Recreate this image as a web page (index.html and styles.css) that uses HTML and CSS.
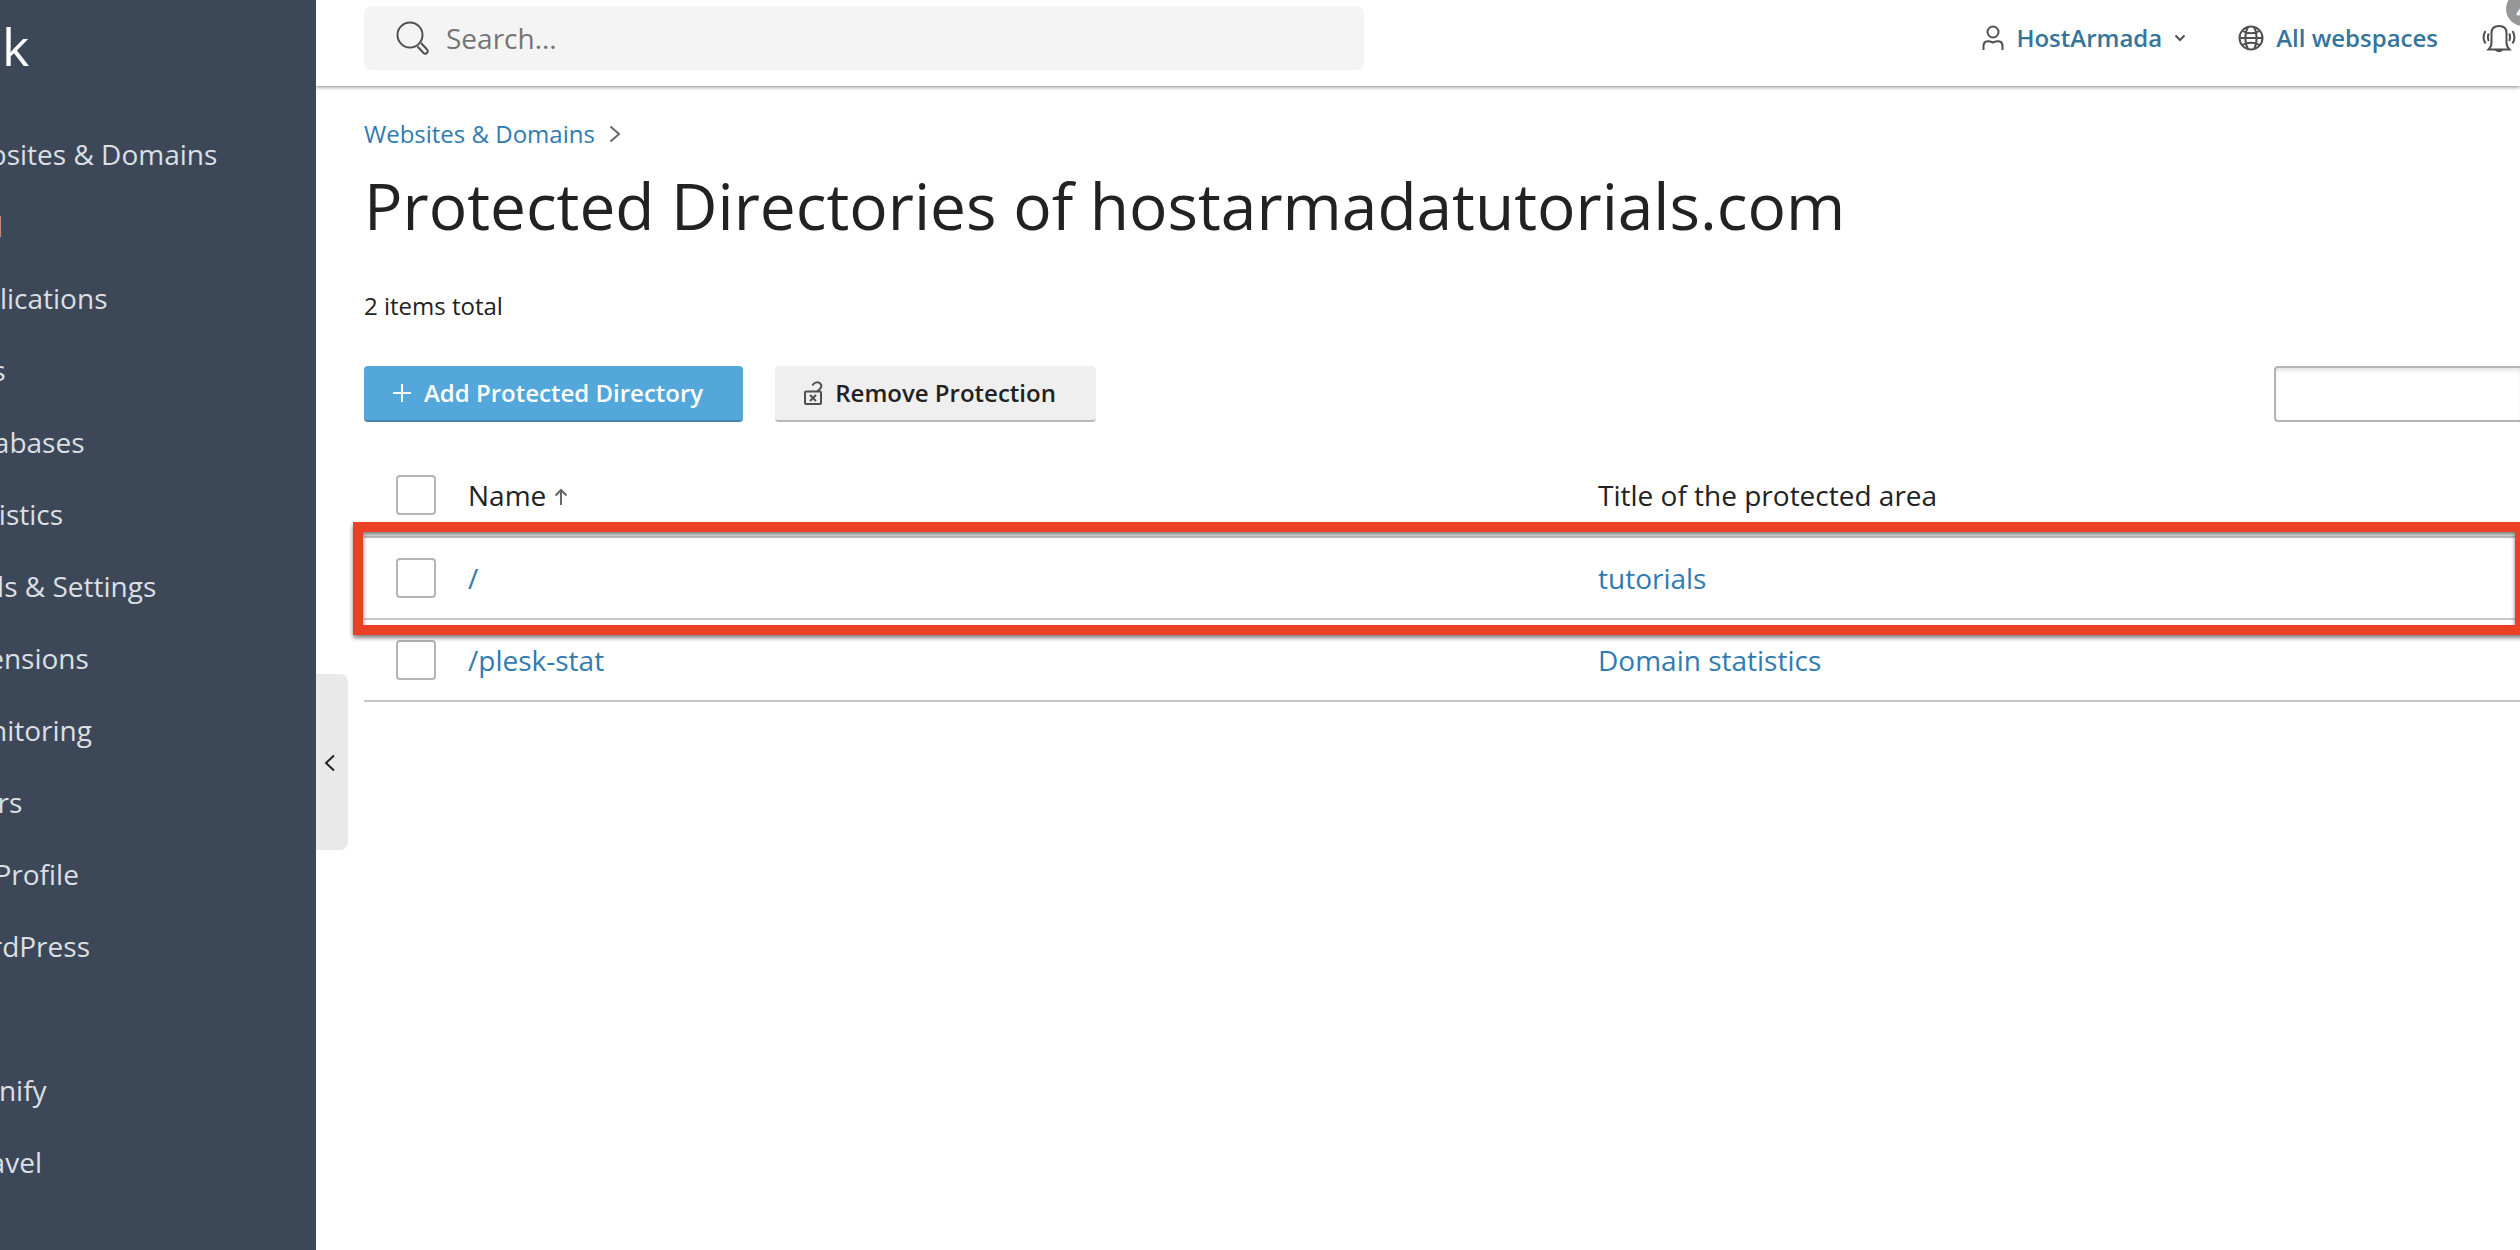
FILE: index.html
```html
<!DOCTYPE html>
<html lang="en">
<head>
<meta charset="utf-8">
<title>Protected Directories of hostarmadatutorials.com</title>
<link rel="stylesheet" href="styles.css">
</head>
<body>
<div class="app">
  <aside class="sidebar">
    <a class="logo" href="#">k</a>
    <nav class="menu" aria-label="Main menu">
      <a href="#">Websites &amp; Domains</a>
      <a href="#">Mail</a>
      <a href="#">Applications</a>
      <a href="#">Files</a>
      <a href="#">Databases</a>
      <a href="#">Statistics</a>
      <a href="#">Tools &amp; Settings</a>
      <a href="#">Extensions</a>
      <a href="#">Monitoring</a>
      <a href="#">Users</a>
      <a href="#">My Profile</a>
      <a href="#">WordPress</a>
      <span class="menu-gap"></span>
      <a href="#">Imunify</a>
      <a href="#">Laravel</a>
    </nav>
    <button class="collapse" type="button" aria-label="Collapse menu">
      <svg width="12" height="18" viewBox="0 0 12 18" fill="none" stroke="#222" stroke-width="2"><path d="M10 1.500 2 9l8 7.500"/></svg>
    </button>
  </aside>
  <div class="page">
    <header class="topbar">
      <label class="search">
        <svg width="34" height="34" viewBox="0 0 34 34" fill="none" stroke="#505050" stroke-width="2"><circle cx="14" cy="14" r="12.500"/><path d="M21.500 25.500l6 6.500c2.500 2 5.500-1 3.500-3.500l-6-6.500"/></svg>
        <input type="search" placeholder="Search..." aria-label="Search">
      </label>
      <div class="tools">
        <a class="tool" href="#">
          <svg width="22" height="26" viewBox="0 0 22 26" fill="none" stroke="#505050" stroke-width="2"><circle cx="11" cy="7" r="5.500"/><path d="M1.500 25v-4c0-5 4-6 9.500-3.500C16.500 15 20.500 16 20.500 21v4"/></svg>
          HostArmada
          <svg width="12" height="8" viewBox="0 0 12 8" fill="none" stroke="#505050" stroke-width="2"><path d="M1.500 1.500 6 6l4.500-4.500"/></svg>
        </a>
        <a class="tool" href="#">
          <svg width="26" height="26" viewBox="0 0 26 26" fill="none" stroke="#505050" stroke-width="2"><circle cx="13" cy="13" r="11.500"/><path d="M10 2C6.500 8 6.500 18 10 24M16 2c3.500 6 3.500 16 0 22M4.500 6c5 3 12 3 17 0M1.500 13h23M4.500 20c5-3 12-3 17 0"/></svg>
          All webspaces
        </a>
        <button class="bell" type="button" aria-label="Notifications">
          <svg width="34" height="28" viewBox="0 0 34 28" fill="none" stroke="#505050" stroke-width="2"><path d="M6.500 25.500h21c-2-2-3-4-3-7V9c0-4.500-3-7-7.500-7s-7.500 2.500-7.500 7v9.500c0 3-1 5-3 7zM3.500 7c-2.500 4-2.500 8.500 0 12.500M30.500 7c2.500 4 2.500 8.500 0 12.500M6.800 9.500c-1.200 2.500-1.200 5 0 7.500M27.200 9.500c1.200 2.500 1.200 5 0 7.500"/><path d="M15 26.500h4l-2 1.500z"/></svg>
          <span class="badge">4</span>
        </button>
      </div>
    </header>
    <main class="content">
      <nav class="crumbs" aria-label="Breadcrumb">
        <a href="#">Websites &amp; Domains</a>
        <svg width="12" height="18" viewBox="0 0 12 18" fill="none" stroke="#666" stroke-width="2"><path d="M1.500 1.500 10 9l-8.500 7.500"/></svg>
      </nav>
      <h1>Protected Directories of hostarmadatutorials.com</h1>
      <p class="total">2 items total</p>
      <div class="toolbar">
        <button class="btn primary" type="button">
          <svg width="20" height="20" viewBox="0 0 20 20" fill="none" stroke="#fff" stroke-width="2"><path d="M10 1v18M1 10h18"/></svg>
          Add Protected Directory
        </button>
        <button class="btn" type="button">
          <svg width="20" height="24" viewBox="0 0 20 24" fill="none" stroke="#505050" stroke-width="2"><rect x="2" y="10.500" width="16" height="12.500" rx="1"/><path d="M7 14l6 6M13 14l-6 6M14 10.500c3.500-2.500 5-5 4-7-2-3.500-7-2.500-8.500 1"/></svg>
          Remove Protection
        </button>
        <input class="filter" type="text" aria-label="Filter directories">
      </div>
      <div class="listing">
        <table>
          <colgroup><col class="col-check"><col class="col-name"><col></colgroup>
          <thead>
            <tr>
              <th class="check"><input type="checkbox" aria-label="Select all"></th>
              <th>Name <svg width="14" height="18" viewBox="0 0 14 18" fill="none" stroke="#666" stroke-width="2"><path d="M7 17V2M1.500 7.500 7 2l5.500 5.500"/></svg></th>
              <th>Title of the protected area</th>
            </tr>
          </thead>
          <tbody>
            <tr>
              <td class="check"><input type="checkbox" aria-label="Select /"></td>
              <td><a href="#">/</a></td>
              <td><a href="#">tutorials</a></td>
            </tr>
            <tr>
              <td class="check"><input type="checkbox" aria-label="Select /plesk-stat"></td>
              <td><a href="#">/plesk-stat</a></td>
              <td><a href="#">Domain statistics</a></td>
            </tr>
          </tbody>
        </table>
        <div class="highlight"></div>
      </div>
    </main>
  </div>
</div>
</body>
</html>
```
FILE: styles.css
```css
* { box-sizing: border-box; }

body {
  margin: 0;
  background: #fff;
  color: #222;
  font: 28px/40px "Open Sans", sans-serif;
  overflow-x: hidden;
}

a { color: #2f7bb0; text-decoration: none; }
button, input { font: inherit; color: inherit; }
svg { flex: none; }

.app { display: flex; min-height: 100vh; overflow: hidden; }

.sidebar {
  position: relative;
  z-index: 2;
  flex: none;
  width: 416px;
  margin-left: -100px;
  background: #3c4858;
}
.logo {
  display: block;
  padding: 10px 0 0 102px;
  height: 118px;
  color: #fff;
  font-size: 52px;
  line-height: 72px;
}
.menu { display: flex; flex-direction: column; padding-left: 48px; }
.menu a, .menu-gap { height: 72px; line-height: 72px; color: #dcdfe3; }
.collapse {
  position: absolute;
  left: 100%;
  top: 674px;
  width: 32px;
  height: 176px;
  padding: 0 0 2px 8px;
  border: 0;
  border-radius: 0 8px 8px 0;
  background: #e9e9e9;
  text-align: left;
}

.page { flex: 1; min-width: 0; }

.topbar {
  display: flex;
  justify-content: space-between;
  height: 86px;
  padding: 6px 4px 0 48px;
  box-shadow: 0 1px 4px rgba(0, 0, 0, .5);
}
.search {
  flex: 0 1 1000px;
  display: flex;
  align-items: center;
  gap: 16px;
  height: 64px;
  padding: 0 32px;
  border-radius: 8px;
  background: #f4f4f4;
}
.search input {
  flex: 1;
  min-width: 0;
  padding: 0;
  border: 0;
  background: none;
  outline: 0;
}
.search input::placeholder { color: #757575; opacity: 1; }

.tools { display: flex; align-items: center; height: 64px; }
.tool {
  display: flex;
  align-items: center;
  gap: 12px;
  margin-right: 52px;
  color: #35749b;
  font-size: 24px;
  font-weight: 600;
}
.tool + .tool { margin-right: 44px; }
.bell {
  position: relative;
  display: flex;
  padding: 0;
  border: 0;
  background: none;
}
.badge {
  position: absolute;
  left: 24px;
  top: -32px;
  width: 34px;
  height: 34px;
  border-radius: 50%;
  background: #979797;
  color: #fff;
  font-size: 24px;
  font-weight: 600;
  line-height: 36px;
}

.content { padding: 28px 0 0 48px; }
.crumbs { display: flex; align-items: center; gap: 14px; font-size: 24px; }
h1 {
  margin: 8px 0 0;
  font-size: 64px;
  font-weight: 400;
  line-height: 88px;
}
.total { margin: 36px 0 40px; font-size: 24px; }

.toolbar { display: flex; gap: 32px; height: 56px; }
.btn {
  display: flex;
  align-items: center;
  gap: 12px;
  padding: 0 40px 0 28px;
  border: 0;
  border-bottom: 2px solid #b9b9b9;
  border-radius: 4px;
  background: #efefef;
  font-size: 24px;
  font-weight: 600;
}
.btn.primary { border-color: #4585ad; background: #53a7da; color: #fff; }
.filter {
  width: 246px;
  margin-left: auto;
  border: 2px solid #b4b4b4;
  border-right: 0;
  border-radius: 4px 0 0 4px;
  background: #fff;
  box-shadow: inset 0 4px 4px -1px #e6e6e6;
}

.listing { position: relative; margin-top: 32px; }
table { width: 100%; border-spacing: 0; table-layout: fixed; }
.col-check { width: 104px; }
.col-name { width: 1130px; }
th, td {
  height: 82px;
  padding: 0;
  border-bottom: 2px solid #c8c8c8;
  text-align: left;
  font-weight: 400;
}
th { height: 84px; }
.check { padding-left: 32px; }
.check input {
  display: block;
  appearance: none;
  width: 40px;
  height: 40px;
  margin: 0;
  border: 2px solid #b4b4b4;
  border-radius: 4px;
  background: #fff;
}
/* Frame drawn around the first directory */
.highlight {
  position: absolute;
  top: 68px;
  left: -11px;
  right: -5px;
  height: 113px;
  border: 10px solid #eb4026;
  filter: drop-shadow(0 3px 2px rgba(0, 0, 0, .5));
  pointer-events: none;
}
```
